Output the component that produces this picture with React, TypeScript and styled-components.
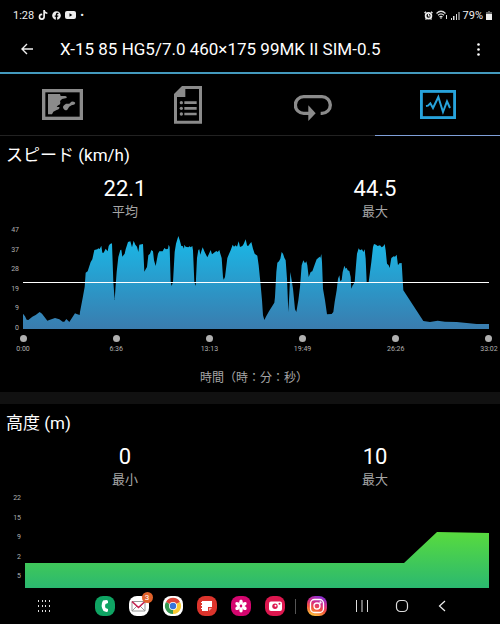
import React from "react";
import styled, { createGlobalStyle } from "styled-components";
import { FaTiktok, FaFacebook } from "react-icons/fa";

const GlobalStyle = createGlobalStyle`
  * { box-sizing: border-box; }
  body { margin: 0; background: #000; }
  h1, h2, p { margin: 0; font-weight: 400; }
  button { padding: 0; border: 0; background: none; color: inherit; font: inherit; cursor: pointer; }
  svg { display: block; }
`;

const Screen = styled.div`
  display: flex;
  flex-direction: column;
  min-height: 100vh;
  overflow-x: hidden;
  background: #000;
  color: #fff;
  font-family: Roboto, "Noto Sans CJK JP", sans-serif;
`;

const StatusBar = styled.div`
  display: flex;
  justify-content: space-between;
  height: 30px;
  padding: 0 8px 0 13px;
  font-size: 11px;
  color: #eee;
`;

const StatusGroup = styled.div<{ $gap: number }>`
  display: flex;
  align-items: center;
  gap: ${(p) => p.$gap}px;
`;

const AppBar = styled.header`
  display: flex;
  align-items: center;
  height: 44px;
  padding: 0 15px 4px 20px;
  border-bottom: 2px solid #439abe;
`;

const AppTitle = styled.h1`
  flex: 1;
  margin-left: 26px;
  font-size: 17px;
  line-height: 24px;
  white-space: nowrap;
`;

const IconButton = styled.button`
  display: flex;
  align-items: center;
  justify-content: center;
  min-width: 14px;
  height: 20px;
`;

const Tabs = styled.nav`
  display: grid;
  grid-template-columns: repeat(4, 1fr);
  height: 62px;
`;

const Tab = styled.button<{ $active?: boolean }>`
  display: flex;
  align-items: center;
  justify-content: center;
  color: ${(p) => (p.$active ? "#27a3dc" : "#8b8b8b")};
  border-bottom: 1px solid ${(p) => (p.$active ? "#7f9fd8" : "#222")};
`;

const Section = styled.section`
  padding-top: 7px;
`;

const SectionTitle = styled.h2`
  padding-left: 6px;
  font-size: 17px;
  line-height: 24px;
`;

const Stats = styled.div`
  display: grid;
  grid-template-columns: 1fr 1fr;
  margin-top: 8px;
  text-align: center;
`;

const StatValue = styled.p`
  font-size: 22px;
  line-height: 28px;
`;

const StatLabel = styled.p`
  font-size: 13px;
  line-height: 18px;
  color: #a6a6a6;
`;

const ChartRow = styled.div`
  display: flex;
  gap: 4px;
  margin-top: 4px;
  padding-right: 11px;
`;

const YAxis = styled.div<{ $width: number; $height: number }>`
  display: flex;
  flex-direction: column;
  justify-content: space-between;
  width: ${(p) => p.$width}px;
  height: ${(p) => p.$height}px;
  font-size: 7px;
  line-height: 10px;
  text-align: right;
  color: #b0b0b0;
`;

const Plot = styled.svg<{ $height: number }>`
  flex: 1;
  min-width: 0;
  height: ${(p) => p.$height}px;
  margin-top: 5px;
`;

const XAxis = styled.div`
  display: flex;
  justify-content: space-between;
  margin-top: 2px;
  padding: 0 1px 0 13px;
`;

const Tick = styled.div`
  display: flex;
  flex-direction: column;
  align-items: center;
  gap: 2px;
  width: 20px;
  font-size: 7px;
  line-height: 10px;
  color: #b0b0b0;
`;

const Dot = styled.span`
  width: 7px;
  height: 7px;
  border-radius: 50%;
  background: #b0b0b0;
`;

const AxisTitle = styled.p`
  margin-top: 15px;
  padding: 0 0 5px 8px;
  font-size: 12px;
  line-height: 18px;
  text-align: center;
  color: #a6a6a6;
`;

const Divider = styled.div`
  height: 12px;
  background: #111;
`;

const NavBar = styled.nav`
  display: flex;
  align-items: center;
  justify-content: space-between;
  height: 36px;
  margin-top: auto;
  padding: 0 51px 0 37px;
`;

const AppIcons = styled.div`
  display: flex;
  align-items: center;
  gap: 14px;
  margin-left: 15px;
`;

const AppIcon = styled.button<{ $bg: string }>`
  position: relative;
  display: flex;
  align-items: center;
  justify-content: center;
  width: 20px;
  height: 20px;
  border-radius: 8px;
  background: ${(p) => p.$bg};
`;

const Badge = styled.span`
  position: absolute;
  top: -4px;
  right: -4px;
  width: 11px;
  height: 11px;
  border-radius: 50%;
  background: #e0622a;
  font-size: 8px;
  line-height: 11px;
  color: #fff;
`;

const Separator = styled.span`
  width: 1px;
  height: 15px;
  margin: 0 -3px 0 -4px;
  background: #555;
`;

const SystemButtons = styled.div`
  display: flex;
  align-items: center;
  gap: 26px;
`;

// Speed trace: x runs 69..1467 over the ride, y grows downwards, 321 is zero.
const SPEED_TRACE =
  "69,275 75,283 80,293 85,294 97,284 107,279 119,270 126,275 142,296 150,293 165,288 178,292 188,299 193,299 199,291 208,300 225,274 230,276 239,279 240,270 248,228 254,195 257,152 263,148 272,120 277,112 283,84 292,82 295,79 299,81 304,71 307,92 311,92 317,80 323,88 326,72 330,66 336,64 340,180 344,234 347,190 350,150 355,105 361,84 364,83 367,104 374,95 377,82 384,60 391,58 396,76 401,56 406,68 411,74 415,90 418,68 429,66 433,149 437,142 441,135 445,100 450,95 454,84 459,88 462,115 467,132 474,95 478,88 488,88 493,78 498,82 504,80 506,68 509,75 512,180 515,192 519,180 524,90 528,65 535,42 539,54 544,72 548,72 552,80 553,68 557,74 565,76 569,73 572,76 577,72 579,85 583,180 587,192 591,108 595,84 598,82 601,98 604,88 608,76 614,90 622,106 627,95 632,84 636,97 645,90 649,87 653,90 658,84 661,95 665,108 669,165 671,173 675,165 682,108 687,96 692,85 698,68 702,74 707,70 711,74 716,58 720,75 727,72 731,66 737,52 741,70 744,73 749,66 754,60 759,80 764,95 772,101 776,130 782,190 786,235 789,280 793,294 799,282 807,268 823,242 825,225 829,150 832,122 837,118 841,110 845,90 849,95 853,107 857,115 861,170 865,270 868,215 871,150 875,175 879,200 885,262 889,270 895,235 900,195 905,130 910,115 915,124 919,118 922,130 926,165 932,150 937,148 945,125 950,112 955,108 958,104 961,107 964,96 966,120 969,200 975,235 981,277 995,276 1000,270 1004,240 1010,205 1014,170 1018,160 1021,178 1025,174 1028,150 1033,131 1037,140 1040,137 1043,145 1048,147 1052,165 1054,200 1058,190 1061,186 1064,180 1068,130 1071,95 1076,79 1080,85 1086,82 1090,90 1094,82 1097,110 1100,180 1106,180 1110,150 1114,120 1119,75 1122,66 1128,68 1133,72 1140,70 1145,76 1150,73 1154,66 1157,85 1161,125 1166,130 1169,138 1174,108 1181,103 1185,104 1190,98 1194,130 1198,124 1205,123 1210,205 1270,297 1290,300 1313,296 1335,299 1370,300 1430,306 1467,306";

const TIMES = ["0:00", "6:36", "13:13", "19:49", "26:26", "33:02"];

const MapIcon = () => (
  <svg width="41" height="31" viewBox="0 0 123 93" fill="currentColor">
    <rect x="5" y="5" width="113" height="83" fill="none" stroke="currentColor" strokeWidth="10" />
    <path d="M18 15H54L56 21H70Q76 23 74 27L60 30Q56 34 54 36Q56 42 54 46Q46 50 44 54H52Q54 60 44 63L34 68L30 76H18Z" />
    <path d="M66 61Q60 54 66 49L72 44L82 44L88 38Q98 36 100 42Q98 49 90 48Q80 52 76 62Q70 66 66 61Z" />
  </svg>
);

const ReportIcon = () => (
  <svg width="28" height="38" viewBox="0 0 84 114" fill="currentColor">
    <path fillRule="evenodd" d="M24 0H84V113H0V24ZM34 9H75V104H9V33H34Z" />
    <path d="M31 46H68V54H31ZM31 63H68V71H31ZM31 80H68V88H31Z" />
    <circle cx="22" cy="50" r="5" />
    <circle cx="22" cy="67" r="5" />
    <circle cx="22" cy="84" r="5" />
  </svg>
);

const LapsIcon = () => (
  <svg width="38" height="32" viewBox="0 -18 114 96">
    <path d="M80 55H84A25 25 0 0 0 84 5H29A25 25 0 0 0 29 55H46" fill="none" stroke="currentColor" strokeWidth="10" />
    <path d="M43 31L65 55L43 78Z" fill="currentColor" />
  </svg>
);

const GraphIcon = () => (
  <svg width="36" height="29" viewBox="0 0 108 87" fill="none" stroke="currentColor">
    <rect x="4" y="4" width="100" height="79" strokeWidth="9" />
    <path d="M18 48L24 47L31 40L39 54L55 21L69 66L81 34L90 54" strokeWidth="6" />
  </svg>
);

const StatusIcons = () => (
  <>
    <svg width="9" height="9" viewBox="0 0 9 9" aria-label="Alarm">
      <circle cx="4.5" cy="4.8" r="2.9" fill="none" stroke="#eee" strokeWidth="1.7" />
      <path d="M4.5 3V5H6M.5 2L2 .7M8.5 2L7 .7M1.5 8.5L2.5 7.5M7.5 8.5L6.5 7.5" stroke="#eee" strokeWidth="1.2" fill="none" />
    </svg>
    <svg width="12" height="10" viewBox="0 0 12 10" fill="none" stroke="#ddd" aria-label="Wi-Fi">
      <path d="M.5 3.5Q5 -1 9.5 3.5M2 5.3Q5 2.5 8 5.3M3.5 7Q5 5.8 6.5 7" strokeWidth="1.2" />
      <path d="M5 7V9M10.5 5V9" />
    </svg>
    <svg width="9" height="9" viewBox="0 0 9 9" fill="#ddd" aria-label="Signal">
      <path d="M0 7H1V9H0ZM2 5H3.5V9H2ZM5 3H6V9H5ZM7.5 1H8.5V9H7.5Z" />
    </svg>
  </>
);

function Stat({ value, label }: { value: string; label: string }) {
  return (
    <div>
      <StatValue>{value}</StatValue>
      <StatLabel>{label}</StatLabel>
    </div>
  );
}

export default function App() {
  return (
    <Screen lang="ja">
      <GlobalStyle />
      <StatusBar>
        <StatusGroup $gap={4}>
          <span>1:28</span>
          <FaTiktok size={10} aria-label="TikTok" />
          <FaFacebook size={9} aria-label="Facebook" />
          <svg width="11" height="8" viewBox="0 0 11 8" aria-label="YouTube">
            <rect width="11" height="8" rx="2" fill="#eee" />
            <path d="M4.5 2.3V5.7L7.3 4Z" fill="#000" />
          </svg>
          <span>•</span>
        </StatusGroup>
        <StatusGroup $gap={3}>
          <StatusIcons />
          <span>79%</span>
          <svg width="6" height="9" viewBox="0 0 6 9" aria-label="Battery">
            <path d="M2 0H4V1H6V3H0V1H2Z" fill="#666" />
            <path d="M0 3H6V9H0Z" fill="#eee" />
          </svg>
        </StatusGroup>
      </StatusBar>

      <AppBar>
        <IconButton aria-label="Back">
          <svg width="14" height="12" viewBox="0 0 14 12" fill="none" stroke="#eee" strokeWidth="1.4">
            <path d="M13 6H2M7 1L2 6L7 11" />
          </svg>
        </IconButton>
        <AppTitle>X-15 85 HG5/7.0 460×175 99MK II SIM-0.5</AppTitle>
        <IconButton aria-label="More options">
          <svg width="3" height="13" viewBox="0 0 3 13" fill="#fff">
            <circle cx="1.5" cy="1.5" r="1.3" />
            <circle cx="1.5" cy="6.5" r="1.3" />
            <circle cx="1.5" cy="11.5" r="1.3" />
          </svg>
        </IconButton>
      </AppBar>

      <Tabs>
        <Tab aria-label="Map"><MapIcon /></Tab>
        <Tab aria-label="Report"><ReportIcon /></Tab>
        <Tab aria-label="Laps"><LapsIcon /></Tab>
        <Tab aria-label="Graphs" $active><GraphIcon /></Tab>
      </Tabs>

      <Section>
        <SectionTitle>スピード (km/h)</SectionTitle>
        <Stats>
          <Stat value="22.1" label="平均" />
          <Stat value="44.5" label="最大" />
        </Stats>
        <ChartRow>
          <YAxis $width={19} $height={108}>
            {["47", "37", "28", "19", "9", "0"].map((v) => <span key={v}>{v}</span>)}
          </YAxis>
          <Plot $height={99} viewBox="69 24 1398 297" preserveAspectRatio="none">
            <defs>
              <linearGradient id="speed" x1="0" y1="0" x2="0" y2="1">
                <stop offset="0" stopColor="#19b9e8" />
                <stop offset="1" stopColor="#3a7cae" />
              </linearGradient>
            </defs>
            <polygon points={`69,321 ${SPEED_TRACE} 1467,321`} fill="url(#speed)" />
            <rect x="69" y="180" width="1398" height="3" fill="#fff" />
          </Plot>
        </ChartRow>
        <XAxis>
          {TIMES.map((t) => (
            <Tick key={t}><Dot />{t}</Tick>
          ))}
        </XAxis>
        <AxisTitle>時間（時：分：秒）</AxisTitle>
      </Section>

      <Divider />

      <Section>
        <SectionTitle>高度 (m)</SectionTitle>
        <Stats>
          <Stat value="0" label="最小" />
          <Stat value="10" label="最大" />
        </Stats>
        <ChartRow>
          <YAxis $width={21} $height={88}>
            {["22", "15", "9", "2", "5"].map((v) => <span key={v}>{v}</span>)}
          </YAxis>
          <Plot $height={90} viewBox="0 0 464 90" preserveAspectRatio="none">
            <defs>
              <linearGradient id="altitude" x1="0" y1="0" x2="0" y2="1">
                <stop offset="0" stopColor="#58db3e" />
                <stop offset="1" stopColor="#2bb870" />
              </linearGradient>
            </defs>
            <polygon points="0,90 0,65 379,65 412,34 464,35 464,90" fill="url(#altitude)" />
          </Plot>
        </ChartRow>
      </Section>

      <NavBar>
        <IconButton aria-label="All apps">
          <svg width="14" height="14" viewBox="0 0 14 14" fill="#ddd">
            {[1, 5, 8, 12].map((x) =>
              [1, 6, 11].map((y) => <rect key={`${x}-${y}`} x={x} y={y} width="1" height="2" />)
            )}
          </svg>
        </IconButton>
        <AppIcons>
          <AppIcon $bg="#0fa463" aria-label="Phone">
            <svg width="20" height="20" viewBox="0 0 20 20" fill="#fff">
              <path d="M8 4.5L11.5 4Q13 4 13 5.500V7L10.5 8Q9.5 10 10.5 12L13 13V14.5Q13 16 11.5 16L8.5 15Q5 10 8 4.5Z" />
            </svg>
          </AppIcon>
          <AppIcon $bg="#fff" aria-label="Mail, 3 unread">
            <svg width="20" height="20" viewBox="0 0 20 20" fill="none">
              <path d="M3 5.5H16V15H3ZM3 15L8 10M16 15L11 10" stroke="#999" />
              <path d="M3 5.5L9.5 11.5L16 5.5" stroke="#c4204f" strokeWidth="1.6" />
            </svg>
            <Badge>3</Badge>
          </AppIcon>
          <AppIcon $bg="#fff" aria-label="Chrome">
            <svg width="20" height="20" viewBox="0 0 20 20">
              <path d="M10 10L3 6A8 8 0 0 1 17 6Z" fill="#dc4437" />
              <path d="M10 10L17 6A8 8 0 0 1 10 18Z" fill="#f8c932" />
              <path d="M10 10V18A8 8 0 0 1 3 6Z" fill="#35974f" />
              <circle cx="10" cy="10" r="4" fill="#fff" />
              <circle cx="10" cy="10" r="3.2" fill="#3574db" />
            </svg>
          </AppIcon>
          <AppIcon $bg="#dc342c" aria-label="Notes">
            <svg width="20" height="20" viewBox="0 0 20 20" fill="#fff">
              <path d="M5 5H15V11H11V15H5Z" />
              <path d="M12 15V12H15Z" fill="#f3aaa5" />
              <path d="M4 6H6V7H4ZM4 9H6V10H4ZM4 12H6V13H4Z" />
            </svg>
          </AppIcon>
          <AppIcon $bg="#d5066f" aria-label="Gallery">
            <svg width="20" height="20" viewBox="0 0 20 20">
              {[0, 60, 120, 180, 240, 300].map((a) => (
                <ellipse key={a} cx="10" cy="6.3" rx="1.8" ry="2.7" fill="#fff" transform={`rotate(${a} 10 10)`} />
              ))}
              <circle cx="10" cy="10" r="1.2" fill="#d5066f" />
            </svg>
          </AppIcon>
          <AppIcon $bg="#dd174f" aria-label="Camera">
            <svg width="20" height="20" viewBox="0 0 20 20" fill="#fff">
              <rect x="4" y="5.5" width="13" height="9.5" rx="2" />
              <circle cx="10" cy="10.3" r="2.7" fill="#dd174f" />
              <circle cx="10.5" cy="9.8" r="1" />
              <circle cx="14.5" cy="7.8" r="1" fill="#dd174f" />
            </svg>
          </AppIcon>
          <Separator />
          <AppIcon $bg="linear-gradient(20deg, #fcc63a 8%, #f4533d 38%, #d22c8c 62%, #8631d8 92%)" aria-label="Instagram">
            <svg width="20" height="20" viewBox="0 0 20 20" fill="none" stroke="#fff" strokeWidth="1.3">
              <rect x="3.5" y="3.5" width="13" height="13" rx="4" />
              <circle cx="10" cy="10" r="3" />
              <circle cx="13.5" cy="6.5" r=".5" />
            </svg>
          </AppIcon>
        </AppIcons>
        <SystemButtons>
          <IconButton aria-label="Recents">
            <svg width="14" height="12" viewBox="0 0 14 12" fill="none" stroke="#ddd">
              <path d="M1.5 0V12M7 0V12M12.5 0V12" />
            </svg>
          </IconButton>
          <IconButton aria-label="Home">
            <svg width="14" height="14" viewBox="0 0 14 14" fill="none" stroke="#ddd" strokeWidth="1.2">
              <rect x="1.5" y="1.5" width="11" height="11" rx="4" />
            </svg>
          </IconButton>
          <IconButton aria-label="Back">
            <svg width="8" height="12" viewBox="0 0 8 12" fill="none" stroke="#eee" strokeWidth="1.2">
              <path d="M7 1L1.5 6L7 11" />
            </svg>
          </IconButton>
        </SystemButtons>
      </NavBar>
    </Screen>
  );
}
